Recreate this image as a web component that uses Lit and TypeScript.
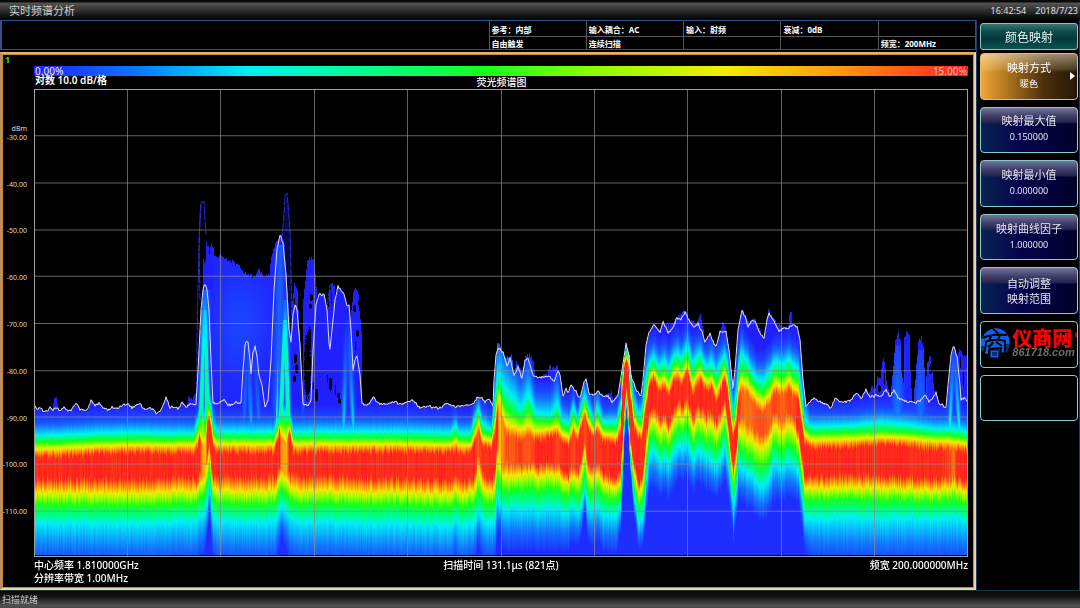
import { LitElement, html, css, svg } from "lit";
import { customElement, property, query, state } from "lit/decorators.js";
import { classMap } from "lit/directives/class-map.js";

const PLOT_W = 934;
const PLOT_H = 466;
// Data tables below are in screen units; this is the plot's origin in them.
const ORIGIN_X = 34;
const ORIGIN_Y = 90;

type Point = [number, number];

const TRACE: Point[] = [
  [34,404],[37,409],[40,407],[43,411],[47,411],[50,407],[53,410],[56,407],[60,411],[64,407],[68,410],[71,411],[74,405],[77,404],[80,409],
  [85,410],[88,408],[91,400],[95,406],[99,402],[103,408],[108,409],[113,407],[118,408],[123,405],[128,404],[132,407],[136,405],[140,403],
  [144,409],[150,408],[154,409],[157,413],[162,408],[166,398],[170,407],[175,407],[178,408],[182,402],[186,407],[190,404],[196,404],
  [198,370],[201,310],[203,290],[204,285],[206,285],[207,290],[209,310],[211,360],[213,403],[216,404],[220,402],[224,400],[228,404],[232,404],
  [236,402],[241,402],[243,370],[245,345],[247,341],[248,342],[250,360],[251,373],[253,352],[255,346],[257,356],[259,375],[262,385],[265,407],
  [268,400],[271,360],[274,290],[277,250],[279,240],[280,237],[281,237],[283,243],[286,275],[289,330],[291,342],[293,315],[295,305],[297,310],[300,345],
  [303,403],[308,405],[311,400],[313,350],[316,305],[319,295],[324,294],[327,310],[329,343],[330,348],[332,330],[335,300],[338,287],[341,290],
  [344,294],[347,306],[349,305],[351,330],[353,370],[355,360],[357,356],[360,375],[362,403],[368,405],[373,397],[378,402],[384,404],
  [390,403],[395,401],[400,404],[412,400],[420,407],[430,406],[440,408],[446,403],[455,406],[465,405],[473,404],[477,397],[481,397],
  [485,403],[488,398],[493,406],[494,380],[496,355],[498,348],[503,352],[507,366],[510,358],[514,375],[518,367],[522,379],[525,360],
  [528,358],[533,375],[540,378],[549,376],[554,382],[558,370],[560,375],[563,396],[566,388],[568,393],[571,385],[575,390],[580,398],
  [584,382],[586,378],[589,393],[594,395],[598,390],[603,396],[608,396],[612,402],[618,395],[622,370],[626,344],[629,355],[631,375],
  [636,390],[641,395],[643,380],[646,345],[649,332],[654,324],[660,332],[663,322],[668,332],[673,328],[677,318],[681,320],[685,312],
  [689,320],[694,328],[698,324],[702,332],[705,342],[710,334],[716,347],[720,332],[726,332],[729,350],[733,388],[735,370],[738,330],
  [742,310],[745,316],[748,327],[752,320],[755,321],[759,332],[764,338],[767,320],[769,313],[773,320],[776,325],[779,332],[784,328],
  [789,328],[793,325],[797,326],[800,340],[803,380],[806,406],[812,399],[816,399],[820,402],[826,404],[831,407],[835,398],[842,402],
  [850,400],[857,393],[861,398],[866,390],[870,397],[876,395],[881,396],[886,390],[890,397],[894,390],[898,397],[905,401],[915,402],
  [920,400],[925,395],[929,402],[933,397],[936,393],[939,403],[946,407],[948,385],[951,355],[953,347],[954,347],[957,356],[960,385],[961,400],
  [965,398],[968,402],
];

// Rare hits lying above the live trace, as upper outlines of filled patches.
const PATCHES: Point[][] = [
  [[52,410],[54,397],[56,397],[58,410]],
  [[186,406],[188,397],[192,397],[195,392],[197,400]],
  [[202,410],[203,260],[205,262],[206,243],[208,244],[209,252],[211,243],[213,246],[214,256],[217,257],[220,253],[223,258],[230,260],[236,264],[240,267],
   [244,272],[247,273],[249,276],[251,275],[254,277],[258,269],[262,274],[266,276],[269,274],[270,265],[272,252],[275,244],[278,239],[281,237],[284,243],[290,330],[292,410]],
  [[291,340],[292,300],[294,283],[297,288],[299,330],[300,400]],
  [[302,380],[303,300],[305,280],[307,262],[309,258],[313,258],[315,272],[316,285],[317,410]],
  [[326,310],[328,305],[329,292],[331,284],[334,284],[335,300]],
  [[349,410],[351,310],[353,290],[356,287],[358,292],[359,310],[361,330],[362,408]],
  [[368,405],[371,396],[374,398],[378,402]],
  [[495,370],[497,342],[499,342],[501,350],[505,358],[508,356],[511,355],[513,368]],
  [[514,374],[516,362],[519,365],[522,372],[524,360],[526,354],[530,355],[533,362],[535,375]],
  [[538,378],[544,373],[547,375],[549,363],[551,368],[554,368],[557,366],[559,370],[562,394]],
  [[604,400],[607,391],[611,391],[613,398],[615,394],[619,395]],
  [[659,330],[663,321],[668,325],[673,321],[677,316],[682,311],[686,312],[689,319],[693,322],[697,322],[700,315],[703,328]],
  [[718,335],[721,326],[723,321],[726,331]],
  [[740,314],[742,309],[745,315],[748,322],[754,317],[760,330]],
  [[766,330],[768,309],[773,318],[777,324],[784,327],[788,326],[789,312],[791,312],[792,326]],
  [[868,396],[871,386],[875,388],[877,376],[880,377],[882,360],[884,359],[886,378],[889,392]],
  [[890,398],[893,365],[895,340],[898,333],[900,340],[901,370],[903,380],[904,337],[906,332],[909,334],[910,370],[912,402]],
  [[913,400],[916,365],[918,340],[921,337],[923,345],[925,390],[927,360],[930,355],[932,372],[935,398]],
  [[957,370],[958,350],[961,349],[963,354],[968,355],[968,402]],
];

// x; light blue, cyan, green, yellow, red heights going down; red, yellow, green, cyan, blue ends; ceiling
const BANDS: number[][] = [
  [34,420,434,441,448,457,477,491,504,522,568,1],
  [128,417,431,438,444,453,477,492,505,523,570,1],
  [193,418,432,438,444,454,475,490,503,521,568,1],
  [197,410,420,430,438,448,478,488,500,518,565,1],
  [199,400,410,422,430,437,472,484,498,516,560,1],
  [202,400,412,425,440,450,466,482,496,515,560,.85],
  [205,400,415,428,440,450,462,478,492,512,550,.8],
  [207,380,395,405,412,425,448,462,480,500,530,1],
  [209,385,400,408,413,420,438,450,463,480,512,1],
  [211,395,408,416,423,432,462,476,488,505,540,1],
  [213,410,425,433,441,450,474,486,500,518,560,1],
  [217,416,430,437,443,453,475,490,503,521,568,1],
  [273,416,430,437,443,453,474,490,503,521,568,1],
  [276,410,422,430,436,445,474,486,500,518,560,1],
  [279,405,415,421,425,432,462,476,490,508,545,1],
  [281,400,410,420,432,445,458,474,488,505,535,.85],
  [286,400,412,422,438,450,462,480,495,512,550,.83],
  [289,405,415,420,427,434,472,485,499,517,560,1],
  [293,416,430,437,443,453,474,490,503,521,568,1],
  [400,416,430,437,443,452,476,491,504,523,568,1],
  [450,418,431,438,444,453,478,493,506,525,570,1],
  [455,412,424,434,441,451,476,489,502,520,560,1],
  [459,418,431,438,444,453,478,493,506,525,570,1],
  [470,418,431,438,444,452,477,490,503,523,565,1],
  [474,405,418,427,434,443,474,488,502,522,560,1],
  [478,395,407,415,421,433,448,470,492,510,545,.94],
  [482,407,422,431,437,446,472,487,501,520,560,1],
  [491,414,428,434,440,449,478,490,503,522,565,1],
  [494,378,402,417,425,437,472,486,501,520,560,1],
  [497,340,374,388,400,413,440,460,480,498,540,1],
  [499,335,372,385,395,415,440,464,485,505,530,.78],
  [502,345,382,400,412,428,460,474,490,508,545,.86],
  [506,350,388,408,423,438,455,475,490,510,550,.95],
  [512,360,395,413,425,440,458,475,488,506,550,.93],
  [520,375,406,418,428,442,462,475,490,510,550,.98],
  [528,360,393,410,425,440,460,472,488,508,550,.93],
  [536,390,412,420,430,441,463,475,490,510,550,1],
  [550,390,413,421,428,437,461,473,488,508,550,1],
  [557,375,402,415,425,436,460,473,488,508,550,.97],
  [562,400,419,426,433,442,468,480,494,512,550,1],
  [568,405,421,428,436,445,473,482,495,512,550,1],
  [573,393,406,415,424,434,460,474,488,505,540,.96],
  [577,406,417,424,431,441,470,480,495,512,545,1],
  [581,385,405,412,418,426,455,470,490,505,535,1],
  [584,380,394,401,408,416,438,452,472,490,512,.95],
  [588,390,407,414,421,430,462,475,490,508,540,1],
  [593,402,418,424,430,438,466,478,492,510,545,1],
  [597,388,406,415,422,432,458,472,486,505,538,.97],
  [603,408,420,427,433,442,470,482,496,514,550,1],
  [616,406,420,428,435,444,474,485,497,512,552,1],
  [620,392,402,412,421,432,468,480,492,506,532,1],
  [622,358,368,375,382,390,438,452,463,475,498,1],
  [624,347,353,357,361,366,405,415,422,430,442,1],
  [626,346,350,353,357,361,384,392,398,404,412,1],
  [628,348,353,357,361,368,405,415,422,430,438,1],
  [630,362,374,382,390,400,440,448,456,464,476,1],
  [634,385,403,412,420,430,464,476,488,500,520,1],
  [638,398,412,420,428,437,477,489,502,520,545,1],
  [641,394,412,422,430,440,481,491,504,522,550,1],
  [644,362,385,398,408,420,456,470,486,506,535,1],
  [646,350,372,385,395,405,430,446,462,480,512,1],
  [649,345,362,370,377,386,411,423,437,455,490,1],
  [653,340,356,365,371,380,405,418,434,450,488,1],
  [659,347,365,374,382,392,416,430,446,462,495,1],
  [664,342,359,369,378,387,412,424,441,458,492,1],
  [668,348,367,377,386,396,422,433,447,463,498,1],
  [673,340,355,365,373,383,408,420,436,452,488,1],
  [677,335,352,362,369,379,400,414,430,448,480,1],
  [681,340,356,367,375,385,405,418,432,448,480,1],
  [687,328,345,356,364,373,395,408,424,444,476,1],
  [692,342,361,373,383,394,414,427,442,458,490,1],
  [699,336,352,363,371,382,404,418,434,452,482,1],
  [706,348,365,374,381,391,413,427,442,458,490,1],
  [711,342,361,371,379,389,408,422,440,460,490,1],
  [716,350,370,381,391,402,420,432,448,465,497,1],
  [720,345,362,373,381,392,410,425,440,460,490,1],
  [724,338,354,363,371,379,398,412,428,448,480,1],
  [727,345,362,372,380,390,414,427,441,458,490,1],
  [729,357,377,389,399,409,432,442,454,470,502,1],
  [731,373,399,410,419,429,455,465,478,492,518,1],
  [733,385,410,421,428,438,467,476,490,508,542,1],
  [736,366,391,402,411,422,446,456,470,488,518,1],
  [738,345,365,378,388,400,418,430,444,464,500,1],
  [741,332,352,370,380,394,408,430,450,468,500,.93],
  [746,342,359,372,384,398,412,436,453,471,506,.9],
  [752,352,370,382,391,404,420,440,458,476,510,.92],
  [757,360,378,388,398,411,428,446,465,484,518,.95],
  [763,360,379,391,402,415,430,447,466,486,520,.94],
  [769,352,370,383,394,407,420,438,458,476,512,.92],
  [774,344,360,373,383,394,408,424,442,462,500,.97],
  [778,344,361,374,384,395,412,430,448,466,500,.94],
  [783,346,363,376,387,399,412,431,449,467,500,.92],
  [788,341,357,369,379,392,408,425,443,462,496,.97],
  [793,346,363,376,386,398,413,429,447,465,498,.96],
  [798,350,368,380,390,402,428,440,454,470,500,1],
  [801,365,388,400,412,424,452,463,476,492,522,1],
  [804,394,417,426,433,443,474,486,499,516,548,1],
  [810,411,425,432,439,448,474,487,499,518,562,1],
  [850,411,424,431,438,447,473,487,499,518,566,1],
  [880,407,421,430,436,445,473,486,499,518,566,1],
  [905,409,423,431,437,446,475,488,500,518,566,1],
  [940,414,428,434,440,450,476,489,501,518,566,1],
  [950,412,427,434,440,450,474,487,500,518,566,.96],
  [953,412,427,435,441,452,468,485,500,518,566,.9],
  [957,414,428,435,441,450,476,488,501,518,566,1],
  [968,416,431,437,443,451,480,492,504,521,566,1],
];

const LEVELS = [0.06, 0.23, 0.48, 0.74, 1, 1, 0.74, 0.48, 0.23, 0.02];

// x0, y0, x1, y1, half width, level at start, level at end
const STREAKS: number[][] = [
  [204,290,204,345,4,.1,.25],[204,310,200,432,2,.2,.42],[205,310,207,425,2,.2,.46],[204,345,203,380,4,.25,.1],
  [202,420,204,470,3,.6,.75],
  [280,245,277,430,4,.08,.12],[285,300,284,360,3,.1,.3],[284,320,280,430,2,.22,.42],[285,320,288,430,2,.24,.4],
  [278,340,276,430,1,.08,.3],
  [247,350,243,428,2,.04,.12],[248,350,251,430,2,.04,.18],[255,360,259,428,2,.04,.13],
  [346,330,343,430,2,.03,.22],[348,320,353,430,2,.03,.22],
  [897,345,897,420,5,.05,.14],[920,350,920,420,5,.04,.12],
  [953,352,949,430,2,.06,.26],[954,352,959,430,2,.06,.26],
  [305,390,300,425,2,.02,.1],[626,350,627,356,2,.3,.5],
];

// Pockets never hit inside the rare-hit patches: x, y, half width, half height
const POCKETS: number[][] = [
  [307,365,3,32],[309,337,1,11],[316,394,1,6],[295,358,1,4],[296,368,1,4],[294,378,1,3],[311,297,1,3],[310,306,1,2],
  [327,378,0,3],[330,383,1,6],[335,389,0,4],[338,395,1,2],[339,400,1,2],[354,308,1,3],[357,333,1,3],[355,345,0,4],
  [359,302,1,2],[331,298,0,5],[294,302,0,4],[884,378,0,6],[879,388,1,3],[930,369,1,4],[960,362,0,5],[963,378,0,6],[313,385,0,3],
];

const PALETTE: [number, number, number, number][] = [
  [0, 32, 32, 255],
  [0.12, 20, 115, 255],
  [0.23, 0, 240, 245],
  [0.36, 0, 255, 125],
  [0.48, 20, 255, 30],
  [0.62, 140, 255, 0],
  [0.74, 245, 235, 0],
  [0.86, 255, 135, 15],
  [1, 255, 30, 30],
];

function colourAt(level: number): [number, number, number] {
  const v = Math.max(0, Math.min(1, level));
  for (let i = 1; i < PALETTE.length; i++) {
    const b = PALETTE[i];
    if (v <= b[0]) {
      const a = PALETTE[i - 1];
      const t = (v - a[0]) / (b[0] - a[0]);
      return [a[1] + (b[1] - a[1]) * t, a[2] + (b[2] - a[2]) * t, a[3] + (b[3] - a[3]) * t];
    }
  }
  return [255, 30, 30];
}

function heightAt(points: Point[], x: number): number {
  if (x < points[0][0] || x > points[points.length - 1][0]) return Infinity;
  for (let i = 1; i < points.length; i++) {
    if (x <= points[i][0]) {
      const [ax, ay] = points[i - 1];
      const [bx, by] = points[i];
      return ay + ((by - ay) * (x - ax)) / (bx - ax || 1);
    }
  }
  return Infinity;
}

function randomSource(seed: number) {
  let s = seed;
  return () => {
    s = (s * 1664525 + 1013904223) >>> 0;
    return s / 4294967296;
  };
}

function jitteredTrace(): Point[] {
  const rnd = randomSource(17);
  const out: Point[] = [];
  for (let x = 34; x <= 968; x += 1) {
    const steep = Math.abs(heightAt(TRACE, Math.min(968, x + 1)) - heightAt(TRACE, Math.max(34, x - 1))) > 6;
    const amp = steep ? 0 : x % 2 ? 1 : 3;
    out.push([x, heightAt(TRACE, x) + (rnd() - 0.5) * amp]);
  }
  return out;
}

@customElement("spectrum-plot")
export class SpectrumPlot extends LitElement {
  static styles = css`
    :host { display: grid; min-width: 0; min-height: 0; }
    canvas, svg { grid-area: 1 / 1; width: 100%; height: 100%; display: block; min-height: 0; }
    .grid { stroke: #8c8c8c; stroke-opacity: 0.7; stroke-width: 1; fill: none; }
    .frame { stroke: #a0a0a0; stroke-width: 2; fill: none; }
    .trace { stroke: #dcdcff; stroke-width: 1; fill: none; stroke-linejoin: round; }
    .rare { stroke: #2a2ad8; stroke-width: 1; fill: none; stroke-dasharray: 7 1; }
    .haze { fill: #10107a; fill-opacity: 0.55; }
  `;

  @query("canvas") private canvas!: HTMLCanvasElement;
  private points = jitteredTrace();

  firstUpdated() {
    const ctx = this.canvas.getContext("2d");
    if (!ctx) return;
    const image = ctx.createImageData(PLOT_W, PLOT_H);
    const rnd = randomSource(5);
    let band = 0;
    for (let px = 1; px < PLOT_W - 1; px++) {
      const x = px + ORIGIN_X;
      while (band < BANDS.length - 2 && BANDS[band + 1][0] < x) band++;
      const a = BANDS[band];
      const b = BANDS[band + 1];
      const linear = (x - a[0]) / (b[0] - a[0]);
      const t = (linear + (1 - Math.cos(linear * Math.PI)) / 2) / 2;
      const row = a.map((n, i) => n + (b[i] - n) * t);
      const upper = (rnd() - 0.5) * 2;
      const lower = (rnd() - 0.5) * 5;
      const edges = row.slice(1, 11).map((y, i) => y + (i < 4 ? upper * 0.5 : i === 4 ? upper * 3 : i === 5 ? lower * 1.5 : lower));
      let rare = Infinity;
      for (const patch of PATCHES) rare = Math.min(rare, heightAt(patch, x));
      rare += (rnd() - 0.5) * 4;
      const live = heightAt(this.points, x);
      const top = Math.min(rare, live);
      const dim = 1 - rnd() * 0.03;
      for (let py = 0; py < PLOT_H - 2; py++) {
        const y = py + ORIGIN_Y;
        if (y < top) continue;
        if (POCKETS.some((p) => ((x - p[0]) / (p[2] + 0.6)) ** 2 + ((y - p[1]) / (p[3] + 0.6)) ** 2 < 0.7 + rnd() * 0.5)) continue;
        let v = 0;
        if (y < edges[0]) {
          v = LEVELS[0] * Math.max(0, 1 - (edges[0] - y) / 12);
        } else {
          v = LEVELS[9];
          for (let k = 1; k < 10; k++) {
            if (y <= edges[k]) {
              const span = edges[k] - edges[k - 1] || 1;
              v = LEVELS[k - 1] + ((LEVELS[k] - LEVELS[k - 1]) * (y - edges[k - 1])) / span;
              break;
            }
          }
        }
        v = Math.min(v, row[11]) * dim;
        if (x > 212 && x < 278) {
          v = Math.max(v, 0.05 * Math.exp(-(((x - 240) / 30) ** 2) - ((y - 325) / 55) ** 2));
        }
        for (const s of STREAKS) {
          if (y < s[1] || y > s[3]) continue;
          const f = (y - s[1]) / (s[3] - s[1]);
          const d = (x - (s[0] + (s[2] - s[0]) * f)) / s[4];
          if (Math.abs(d) < 2.5) v = Math.max(v, (s[5] + (s[6] - s[5]) * f) * Math.exp(-d * d * 0.7));
        }
        const [r, g, bl] = colourAt(v);
        const o = (py * PLOT_W + px) * 4;
        image.data[o] = r;
        image.data[o + 1] = g;
        image.data[o + 2] = bl;
        image.data[o + 3] = 255;
      }
    }
    ctx.putImageData(image, 0, 0);
  }

  private toPath(points: Point[]) {
    return points.map(([x, y]) => `${x - ORIGIN_X},${(y - ORIGIN_Y).toFixed(1)}`).join(" ");
  }

  render() {
    const ninths = [1, 2, 3, 4, 5, 6, 7, 8, 9];
    return html`
      <canvas width=${PLOT_W} height=${PLOT_H}></canvas>
      <svg viewBox="0 0 934 466" preserveAspectRatio="none" aria-hidden="true">
        <polygon class="haze" points=${this.toPath([[283,240],[285,208],[286,196],[288,198],[290,220],[291,270],[292,330],[289,320],[285,260]])}></polygon>
        <polyline class="rare" points=${this.toPath([[197,395],[197,340],[198,290],[199,250],[200,215],[201,203],[204,202],[205,220],[206,235]])}></polyline>
        <polyline class="rare" points=${this.toPath([[200,300],[199,240],[200,225],[201,204]])}></polyline>
        <polyline class="rare" points=${this.toPath([[282,238],[284,215],[285,196],[287,194],[288,206],[290,230],[291,270],[292,330]])}></polyline>
        <polyline class="rare" points=${this.toPath([[326,320],[328,300],[330,286],[333,283]])}></polyline>
        ${ninths.map((n) => {
          const gx = Math.floor(n * 93.4) + 0.5;
          const gy = Math.floor(n * 46.7) + 0.5;
          return svg`
            <line class="grid" x1=${gx} x2=${gx} y1="0" y2="466"></line>
            <line class="grid" x1="0" x2="934" y1=${gy} y2=${gy}></line>`;
        })}
        <polyline class="trace" points=${this.toPath(this.points)}></polyline>
        <rect class="frame" x="0" y="0" width="934" height="466"></rect>
      </svg>
    `;
  }
}

@customElement("brand-mark")
export class BrandMark extends LitElement {
  static styles = css`
    :host { display: flex; align-items: center; gap: 2px; }
    .disc { width: 31px; height: 32px; flex: none; }
    .words { display: flex; flex-direction: column; align-items: flex-start; white-space: nowrap; padding-bottom: 4px; }
    .name { font: 900 20px/20px "Noto Sans CJK SC", sans-serif; color: #f00; }
    .site { font: italic bold 11px/9px "Liberation Sans", sans-serif; color: #6c6c6c; }
    .seal { width: 4px; height: 6px; flex: none; align-self: flex-start; margin-left: -2px; margin-top: 4px; }
  `;

  render() {
    return html`
      <svg class="disc" viewBox="0 0 31 32" aria-hidden="true">
        <path fill="#0a62f0" d="M3 10 Q7 1 17 0 Q27 1 30 10 Q32 18 28 24 L7 26 Q0 22 0 15 Z"></path>
        <path stroke="#000" stroke-width="2" fill="none" d="M14 1 L19 5 M4 10 Q14 5 28 7 M12 8 L10 13 M21 7 L19 12 M6 14 Q16 10 26 13 L26 28 M7 14 Q7 22 3 28"></path>
        <path stroke="#000" stroke-width="2" fill="none" d="M14 14 Q12 18 9 19 M17 14 L23 18 M10 21 L22 20 L21 29 M10 21 L10 30"></path>
        <path fill="#0a62f0" stroke="#000" d="M11 22 H20 V30 H11 Z"></path>
        <path stroke="#000" stroke-width="1" fill="none" d="M13 25 H18 M13 27 H18 M0 19 H7 M0 21 H7 M1 23 H7 M25 17 H31 M25 19 H31 M25 21 H31 M25 23 H30"></path>
      </svg>
      <span class="words"><span class="name">仪商网</span><span class="site">861718.com</span></span>
      <svg class="seal" viewBox="0 0 4 6" aria-hidden="true"><circle cx="3" cy="3" r="3" fill="#a00c18"></circle></svg>
    `;
  }
}

interface MenuItem {
  title: string;
  value?: string;
  second?: string;
  brand?: boolean;
  submenu?: boolean;
}

@customElement("soft-menu")
export class SoftMenu extends LitElement {
  static styles = css`
    :host {
      display: flex; flex-direction: column; gap: 3px; padding: 3px 1px 0 3px;
      background: #000; border-left: 1px solid #203c6c; border-right: 1px solid #203c6c;
      box-sizing: border-box;
    }
    .heading {
      margin: 0; height: 27px; box-sizing: border-box; border: 1px solid #80c8c8; border-radius: 3px;
      background: linear-gradient(#3c7474 0, #0c4c4c 30%, #04383a 60%, #0a5450 100%);
      color: #e8f4f4; font-size: 12px; font-weight: 400; line-height: 27px; text-align: center;
    }
    .keys { flex: 1; display: grid; grid-template-rows: repeat(10, minmax(0, 1fr)); gap: 7px; padding-bottom: 8px; min-height: 0; }
    .key {
      appearance: none; margin: 0; padding: 0; min-width: 0; overflow: hidden; position: relative;
      display: flex; flex-direction: column; align-items: center; justify-content: center;
      border: 1px solid #88ccd0; border-radius: 4px; color: #e4e4f0; font: inherit; font-size: 11px; line-height: 15px;
      background: linear-gradient(#74749c 0, #40406c 18%, #24244c 32%, rgba(8, 8, 60, 0) 36%),
        linear-gradient(90deg, #082450 0, #04044c 40%, #02022c 100%);
    }
    .key .value { font-size: 9px; line-height: 18px; }
    .active {
      border-color: #e4bc70; color: #fff;
      background: linear-gradient(rgba(255, 240, 210, 0.5) 0, rgba(255, 240, 210, 0.15) 34%, rgba(0, 0, 0, 0) 40%),
        linear-gradient(90deg, #f0a838 0, #a8701c 30%, #4c300c 65%, #241804 100%);
    }
    .blank { background: #000; }
    .arrow { position: absolute; right: 2px; top: 18px; width: 5px; height: 8px; }
  `;

  @property({ attribute: false }) items: MenuItem[] = [];
  @state() private chosen = 0;

  private drawKey(item: MenuItem, index: number) {
    const classes = { key: true, active: index === this.chosen, blank: !item.title };
    return html`
      <button type="button" class=${classMap(classes)} aria-label=${item.title || (item.brand ? "仪商网" : "空")}
        @click=${() => { if (item.title) this.chosen = index; }}>
        ${item.title ? html`<span>${item.title}</span>` : ""}
        ${item.second ? html`<span>${item.second}</span>` : ""}
        ${item.value ? html`<span class="value">${item.value}</span>` : ""}
        ${item.brand ? html`<brand-mark></brand-mark>` : ""}
        ${item.submenu ? html`<svg class="arrow" viewBox="0 0 5 8" aria-hidden="true"><path fill="#fff" d="M0 0 L5 4 L0 8 Z"></path></svg>` : ""}
      </button>
    `;
  }

  render() {
    return html`
      <h2 class="heading">颜色映射</h2>
      <div class="keys">${this.items.map((item, i) => this.drawKey(item, i))}</div>
    `;
  }
}

@customElement("app-root")
export class AppRoot extends LitElement {
  static styles = css`
    :host {
      display: grid; grid-template-rows: 20px minmax(0, 1fr) 18px; height: 100vh; overflow: hidden;
      background: #000; color: #fff; font-family: "Noto Sans", "Noto Sans CJK SC", sans-serif;
    }
    .title {
      display: flex; align-items: center; gap: 9px; padding: 2px 2px 0 9px;
      background: linear-gradient(#0a0a0a 0, #0a0a0a 2px, #545454 3px, #2c2c2c 11px, #080808 18px);
    }
    .title h1 { flex: 1; margin: 0; font-size: 11px; font-weight: 400; line-height: 16px; color: #d0d0d0; }
    .title time { font-size: 9px; line-height: 16px; color: #e0e0e0; }
    .work { display: grid; grid-template-columns: minmax(0, 1fr) 104px; min-height: 0; }
    .left { display: flex; flex-direction: column; min-width: 0; min-height: 0; }
    .info {
      display: grid; grid-template-columns: minmax(0, 5fr) repeat(5, minmax(0, 1fr)); grid-template-rows: 15px 13px;
      border: 1px solid #24528c; border-left: 2px solid #384c90; margin-bottom: 2px;
      font-size: 8px; font-weight: 700; line-height: 13px;
    }
    .info .space { grid-row: 1 / 3; }
    .cell { border-left: 1px solid #585858; padding-left: 2px; padding-top: 2px; box-sizing: border-box; white-space: nowrap; min-width: 0; }
    .cell.under { border-top: 1px solid #585858; padding-top: 0; }
    .panel {
      flex: 1; min-height: 0; display: flex; flex-direction: column; box-sizing: border-box; padding: 0 6px 0 0;
      border: 2px solid #d8b480; border-left-color: #b89064; border-right-color: #ecd4ac; border-bottom-color: #ecd4ac;
      box-shadow: inset 0 0 0 1px #d0882c;
    }
    .index { padding-left: 3px; font-size: 9px; font-weight: 700; line-height: 12px; color: #30e030; }
    .indent { margin-left: 32px; }
    .scale {
      display: flex; justify-content: space-between; padding: 0 1px; font-size: 10px; line-height: 10px; color: #d8d8f4;
      background: linear-gradient(90deg, #2020ff 0, #0a78ff 11%, #00f0f4 23%, #00ff90 35%, #14ff1e 48%, #8cff00 60%, #f4ec00 74%, #ff8a10 88%, #ff1e1e 100%);
    }
    .scale { font-weight: 500; }
    .scale .max { color: #ffb0a0; }
    .captions { display: grid; grid-template-columns: 1fr auto 1fr; padding-left: 1px; font-size: 10px; font-weight: 600; line-height: 9px; height: 13px; }
    .captions h2 { margin: 0; font-size: 10px; line-height: 13px; font-weight: 500; }
    .chart { flex: 1; min-height: 0; display: grid; grid-template-columns: 32px minmax(0, 1fr); }
    .axis { display: grid; grid-template-rows: repeat(10, minmax(0, 1fr)); padding-right: 7px; font-size: 7px; line-height: 9px; color: #dcdcdc; text-align: right; }
    .tick { display: flex; flex-direction: column; justify-content: flex-end; margin-bottom: -6px; }
    .foot {
      display: grid; grid-template-columns: 1fr auto 1fr; padding: 2px 0 3px; font-size: 10px; font-weight: 500; line-height: 13px;
    }
    .foot .end { text-align: right; }
    .status {
      padding-left: 2px; font-size: 9px; line-height: 18px; color: #d0d0d0; border-top: 1px solid #183840; box-sizing: border-box;
      background: linear-gradient(#080808 0, #141414 35%, #505050 85%, #484848 100%);
    }
  `;

  private cells = [
    ["参考：内部", "输入耦合：AC", "输入：射频", "衰减：0dB", ""],
    ["自由触发", "连续扫描", "", "", "频宽：200MHz"],
  ];

  private menu: MenuItem[] = [
    { title: "映射方式", value: "暖色", submenu: true },
    { title: "映射最大值", value: "0.150000" },
    { title: "映射最小值", value: "0.000000" },
    { title: "映射曲线因子", value: "1.000000" },
    { title: "自动调整", second: "映射范围" },
    { title: "", brand: true },
    { title: "" },
  ];

  render() {
    const ticks = [-30, -40, -50, -60, -70, -80, -90, -100, -110];
    return html`
      <header class="title"><h1>实时频谱分析</h1><time>16:42:54</time><time>2018/7/23</time></header>
      <main class="work">
        <div class="left">
          <section class="info">
            <div class="space"></div>
            ${this.cells[0].map((c) => html`<div class="cell">${c}</div>`)}
            ${this.cells[1].map((c) => html`<div class="cell under">${c}</div>`)}
          </section>
          <section class="panel">
            <div class="index">1</div>
            <div class="scale indent"><span>0.00%</span><span class="max">15.00%</span></div>
            <div class="captions indent"><span>对数 10.0 dB/格</span><h2>荧光频谱图</h2><span></span></div>
            <div class="chart">
              <div class="axis">
                ${ticks.map((t, i) => html`<div class="tick">${i === 0 ? html`<span>dBm</span>` : ""}<span>${t.toFixed(2)}</span></div>`)}
              </div>
              <spectrum-plot></spectrum-plot>
            </div>
            <div class="foot indent">
              <span>中心频率 1.810000GHz</span><span>扫描时间 131.1μs (821点)</span><span class="end">频宽 200.000000MHz</span>
              <span>分辨率带宽 1.00MHz</span>
            </div>
          </section>
        </div>
        <soft-menu .items=${this.menu}></soft-menu>
      </main>
      <footer class="status">扫描就绪</footer>
    `;
  }
}
